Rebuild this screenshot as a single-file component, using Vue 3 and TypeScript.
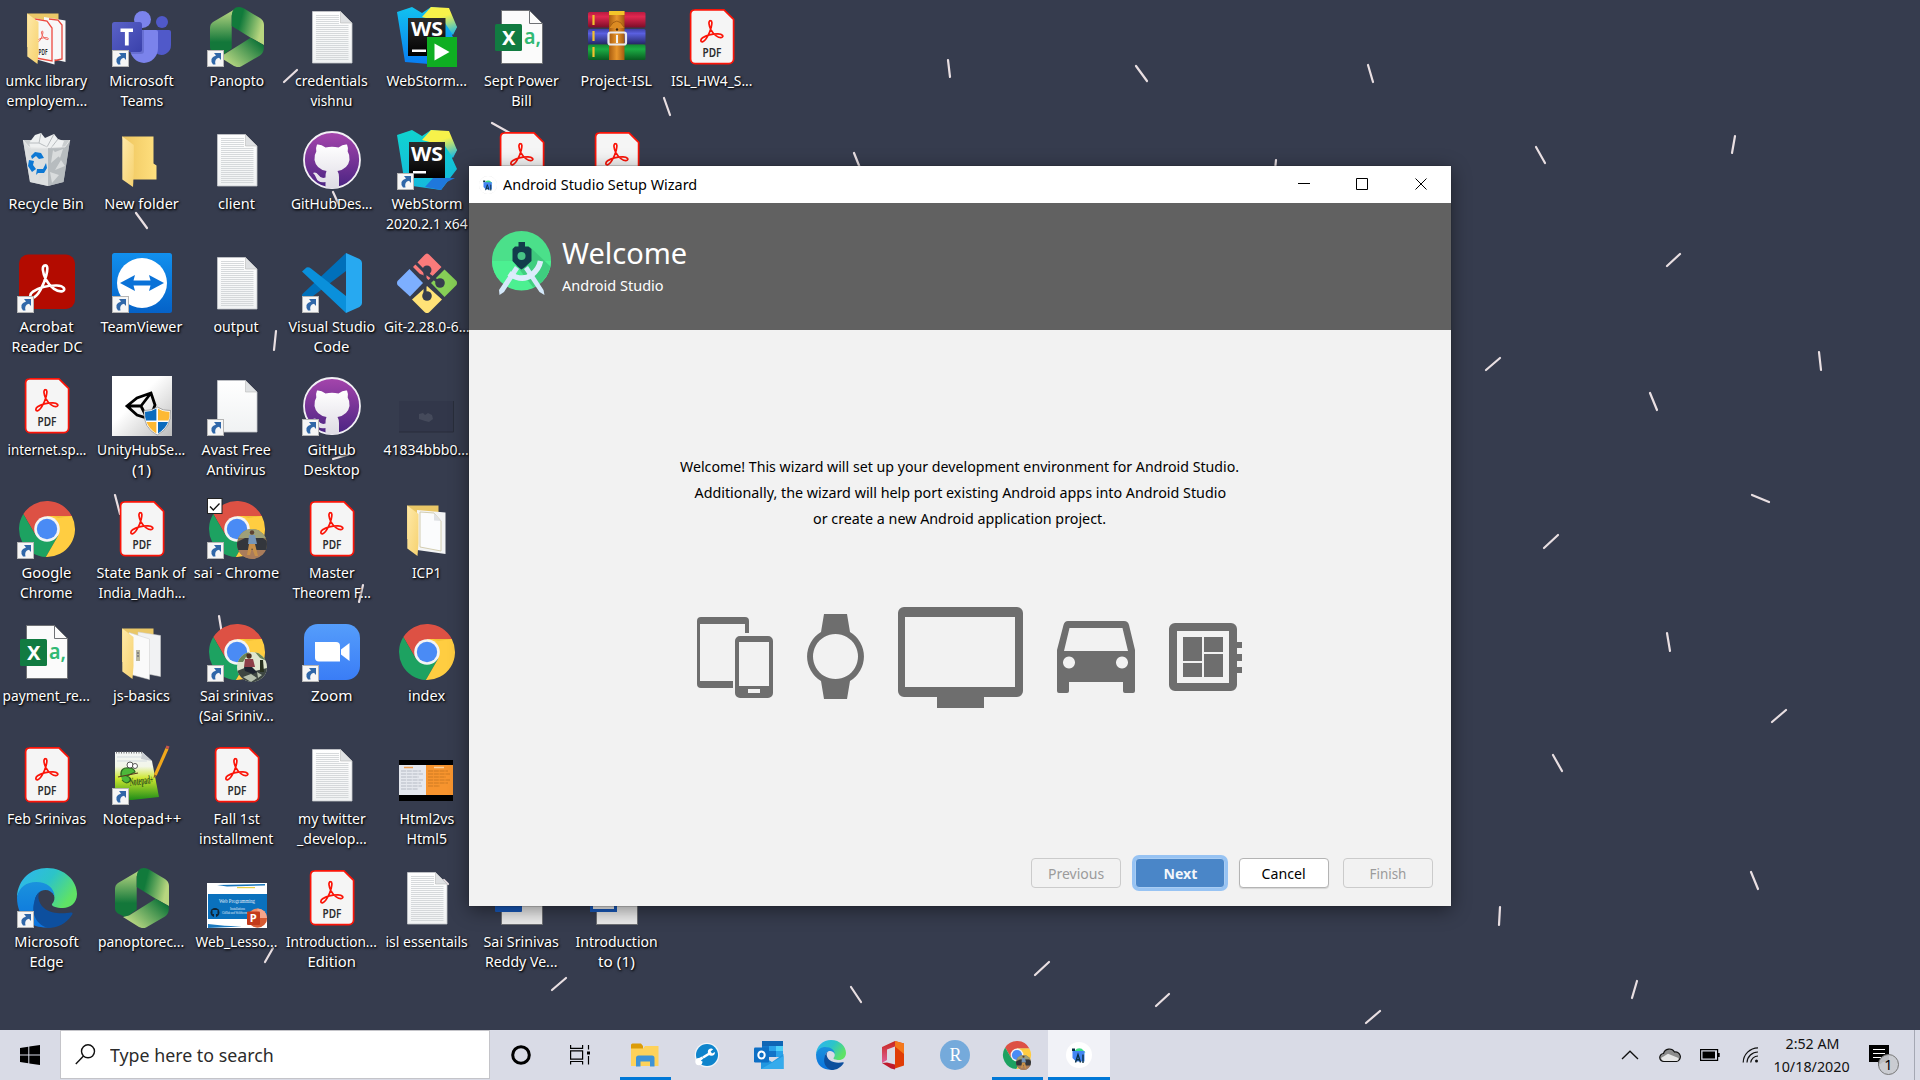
<script setup lang="ts">
import type { Directive } from 'vue'

interface Line { t: string; w: number }
interface Glyph { t: string; x: number; y: number; s: number; w: number; cls: string; r?: number }
interface Item { c: number; r: number; icon: string; lines: Line[]; link?: boolean; check?: boolean; photo?: 1 | 2 }

/* Condenses or widens a run of text to a given pixel width. */
const vFit: Directive<HTMLElement, number> = {
  mounted(el, { value }) {
    const natural = el.offsetWidth
    if (natural > 0) el.style.transform = `scaleX(${(value / natural).toFixed(4)})`
  },
}

const item = (c: number, r: number, icon: string, lines: [string, number][], extra: Partial<Item> = {}): Item =>
  ({ c, r, icon, lines: lines.map(([t, w]) => ({ t, w })), ...extra })

const items: Item[] = [
  item(1, 1, 'folder-pdf', [['umkc library', 82], ['employem...', 81]]),
  item(1, 2, 'bin', [['Recycle Bin', 75]]),
  item(1, 3, 'reader', [['Acrobat', 54], ['Reader DC', 71]], { link: true }),
  item(1, 4, 'pdf', [['internet.sp...', 79]]),
  item(1, 5, 'chrome', [['Google', 50], ['Chrome', 52]], { link: true }),
  item(1, 6, 'excel', [['payment_re...', 87]]),
  item(1, 7, 'pdf', [['Feb Srinivas', 79]]),
  item(1, 8, 'edge', [['Microsoft', 64], ['Edge', 34]], { link: true }),
  item(2, 1, 'teams', [['Microsoft', 64], ['Teams', 43]], { link: true }),
  item(2, 2, 'folder', [['New folder', 75]]),
  item(2, 3, 'teamviewer', [['TeamViewer', 82]], { link: true }),
  item(2, 4, 'unity', [['UnityHubSe...', 88], ['(1)', 19]]),
  item(2, 5, 'pdf', [['State Bank of', 89], ['India_Madh...', 87]]),
  item(2, 6, 'folder-js', [['js-basics', 57]]),
  item(2, 7, 'npp', [['Notepad++', 79]], { link: true }),
  item(2, 8, 'panopto', [['panoptorec...', 86]]),
  item(3, 1, 'panopto', [['Panopto', 55]], { link: true }),
  item(3, 2, 'txt', [['client', 37]]),
  item(3, 3, 'txt', [['output', 45]]),
  item(3, 4, 'blank', [['Avast Free', 69], ['Antivirus', 59]], { link: true }),
  item(3, 5, 'chrome', [['sai - Chrome', 85]], { link: true, check: true, photo: 1 }),
  item(3, 6, 'chrome', [['Sai srinivas', 73], ['(Sai Sriniv...', 75]], { link: true, photo: 2 }),
  item(3, 7, 'pdf', [['Fall 1st', 46], ['installment', 74]]),
  item(3, 8, 'slide', [['Web_Lesso...', 82]]),
  item(4, 1, 'txt', [['credentials', 73], ['vishnu', 42]]),
  item(4, 2, 'github', [['GitHubDes...', 82]]),
  item(4, 3, 'vscode', [['Visual Studio', 87], ['Code', 36]], { link: true }),
  item(4, 4, 'github', [['GitHub', 48], ['Desktop', 56]], { link: true }),
  item(4, 5, 'pdf', [['Master', 46], ['Theorem F...', 79]]),
  item(4, 6, 'zoom', [['Zoom', 41]], { link: true }),
  item(4, 7, 'txt', [['my twitter', 68], ['_develop...', 70]]),
  item(4, 8, 'pdf', [['Introduction...', 91], ['Edition', 48]]),
  item(5, 1, 'webstorm-run', [['WebStorm...', 80]]),
  item(5, 2, 'webstorm', [['WebStorm', 71], ['2020.2.1 x64', 82]], { link: true }),
  item(5, 3, 'git', [['Git-2.28.0-6...', 86]]),
  item(5, 4, 'dark', [['41834bbb0...', 85]]),
  item(5, 5, 'folder-page', [['ICP1', 29]]),
  item(5, 6, 'chrome', [['index', 37]]),
  item(5, 7, 'html5', [['Html2vs', 55], ['Html5', 41]]),
  item(5, 8, 'txt', [['isl essentails', 82]]),
  item(6, 1, 'excel', [['Sept Power', 75], ['Bill', 21]]),
  item(6, 2, 'pdf', []),
  item(6, 8, 'word', [['Sai Srinivas', 75], ['Reddy Ve...', 72]]),
  item(7, 1, 'rar', [['Project-ISL', 72]]),
  item(7, 2, 'pdf', []),
  item(7, 8, 'word2', [['Introduction', 82], ['to (1)', 37]]),
  item(8, 1, 'pdf', [['ISL_HW4_S...', 82]]),
]

/* Lettering that sits on top of an icon's artwork. */
const glyphs: Record<string, Glyph[]> = {
  pdf: [{ t: 'PDF', x: 20.5, y: 50, s: 12.5, w: 19, cls: 'g-dark' }],
  'folder-pdf': [{ t: 'PDF', x: 21.5, y: 48, s: 9, w: 9, cls: 'g-dark' }],
  excel: [
    { t: 'X', x: 10, y: 37.5, s: 20, w: 13.5, cls: 'g-white' },
    { t: 'a,', x: 32, y: 37, s: 21, w: 17, cls: 'g-green' },
  ],
  webstorm: [{ t: 'WS', x: 14, y: 30.5, s: 20, w: 32, cls: 'g-white' }],
  'webstorm-run': [{ t: 'WS', x: 14, y: 29, s: 20, w: 32, cls: 'g-white' }],
  npp: [{ t: 'Notepad+', x: 18, y: 41, s: 12, w: 24, cls: 'g-npp', r: -7 }],
  slide: [
    { t: 'Web Programming', x: 12, y: 35, s: 6.5, w: 36, cls: 'g-slide' },
    { t: 'Installations', x: 23, y: 42.3, s: 3.5, w: 15, cls: 'g-slide' },
    { t: 'GitHub and WebStorm', x: 15, y: 46, s: 3.5, w: 25, cls: 'g-slide' },
    { t: 'P', x: 42.8, y: 54, s: 10.5, w: 7, cls: 'g-white' },
  ],
}

const confetti: [number, number, number, number][] = [
  [948, 60, 950, 77], [1136, 66, 1147, 81], [1368, 65, 1373, 82], [1536, 147, 1545, 163],
  [1735, 136, 1732, 153], [1680, 254, 1667, 266], [1500, 358, 1486, 370], [1650, 393, 1657, 410],
  [1819, 352, 1821, 370], [1752, 495, 1769, 502], [1558, 535, 1544, 548], [1667, 633, 1670, 651],
  [1786, 710, 1772, 722], [1553, 755, 1562, 771], [1751, 872, 1758, 889], [1500, 907, 1499, 925],
  [1637, 981, 1632, 998], [1380, 1011, 1366, 1023], [1169, 994, 1156, 1006], [1049, 962, 1035, 975],
  [851, 987, 861, 1002], [566, 978, 552, 990], [664, 98, 670, 115], [854, 153, 860, 168],
  [492, 123, 510, 133], [1276, 160, 1275, 170], [297, 70, 284, 82], [136, 213, 147, 228],
  [333, 192, 339, 205], [276, 331, 274, 350], [333, 459, 350, 454], [115, 495, 120, 514],
  [363, 585, 359, 602], [219, 616, 222, 634], [273, 948, 265, 962], [444, 880, 448, 884],
]

const textRows = Array.from({ length: 23 }, (_, i) => 8.5 + i * 2)

const apps = [
  { id: 'explorer', state: 'open' }, { id: 'wrench', state: '' }, { id: 'outlook', state: '' },
  { id: 'edge', state: '' }, { id: 'office', state: '' }, { id: 'rstudio', state: '' },
  { id: 'chrome', state: 'open' }, { id: 'studio', state: 'active' },
]
</script>

<template>
  <div class="screen">
    <svg class="defs" width="0" height="0" aria-hidden="true">
      <defs>
        <linearGradient id="gFold" x1="0" y1="0" x2="1" y2="1"><stop offset="0" stop-color="#ffe9a8" /><stop offset="1" stop-color="#f6d270" /></linearGradient>
        <linearGradient id="gFoldB" x1="0" y1="0" x2="1" y2="0"><stop offset="0" stop-color="#eec55e" /><stop offset="1" stop-color="#ffe07f" /></linearGradient>
        <linearGradient id="gPage" x1="0" y1="0" x2="0" y2="1"><stop offset="0" stop-color="#fff" /><stop offset="1" stop-color="#f0f2f3" /></linearGradient>
        <linearGradient id="gPanA" x1="0" y1="0" x2="0" y2="1"><stop offset="0" stop-color="#c0dc86" /><stop offset=".7" stop-color="#13773a" /></linearGradient>
        <linearGradient id="gPanB" x1="0" y1="0" x2="1" y2=".3"><stop offset=".35" stop-color="#117a3b" /><stop offset="1" stop-color="#b8d67f" /></linearGradient>
        <linearGradient id="gPanC" x1="1" y1="0" x2="0" y2=".7"><stop offset=".15" stop-color="#12763a" /><stop offset="1" stop-color="#c3de88" /></linearGradient>
        <linearGradient id="gTeam" x1="0" y1="0" x2="1" y2="1"><stop offset="0" stop-color="#5a62c8" /><stop offset="1" stop-color="#3a41ab" /></linearGradient>
        <linearGradient id="gWs1" x1="0" y1="0" x2="0" y2="1"><stop offset="0" stop-color="#12c2ee" /><stop offset="1" stop-color="#087cf3" /></linearGradient>
        <linearGradient id="gWs2" x1="0" y1="0" x2="0" y2="1"><stop offset="0" stop-color="#10d3cf" /><stop offset="1" stop-color="#15b9dd" /></linearGradient>
        <linearGradient id="gWsY" x1=".4" y1="0" x2=".8" y2="1"><stop offset=".35" stop-color="#f7f24a" /><stop offset="1" stop-color="#20b8e0" /></linearGradient>
        <linearGradient id="gBlk" x1="0" y1="0" x2="0" y2="1"><stop offset="0" stop-color="#2c2c2c" /><stop offset="1" stop-color="#000" /></linearGradient>
        <linearGradient id="gGh" x1="0" y1="0" x2="0" y2="1"><stop offset="0" stop-color="#a545ac" /><stop offset="1" stop-color="#4a2482" /></linearGradient>
        <linearGradient id="gCat" x1="0" y1="0" x2="0" y2="1"><stop offset="0" stop-color="#fff" /><stop offset="1" stop-color="#dedbe4" /></linearGradient>
        <linearGradient id="gTv" x1="0" y1="0" x2="0" y2="1"><stop offset="0" stop-color="#1190ee" /><stop offset="1" stop-color="#0562c8" /></linearGradient>
        <linearGradient id="gUn" x1="0" y1="0" x2="1" y2="1"><stop offset=".4" stop-color="#fff" /><stop offset="1" stop-color="#bcbcbc" /></linearGradient>
        <linearGradient id="gZm" x1="0" y1="0" x2="0" y2="1"><stop offset="0" stop-color="#559dfb" /><stop offset="1" stop-color="#3a7df6" /></linearGradient>
        <linearGradient id="gEd1" x1="0" y1="0" x2="1" y2=".5"><stop offset="0" stop-color="#2fb4f5" /><stop offset=".55" stop-color="#2cc4c8" /><stop offset="1" stop-color="#5fe266" /></linearGradient>
        <linearGradient id="gEd2" x1="0" y1="0" x2="0" y2="1"><stop offset="0" stop-color="#1a92dd" /><stop offset="1" stop-color="#0b72dd" /></linearGradient>
        <linearGradient id="gRed" x1="0" y1="0" x2="0" y2="1"><stop offset="0" stop-color="#b81a40" /><stop offset=".3" stop-color="#e02850" /><stop offset="1" stop-color="#7c0d28" /></linearGradient>
        <linearGradient id="gBlu" x1="0" y1="0" x2="0" y2="1"><stop offset="0" stop-color="#3c40a8" /><stop offset=".3" stop-color="#5a60e0" /><stop offset="1" stop-color="#262968" /></linearGradient>
        <linearGradient id="gGrn" x1="0" y1="0" x2="0" y2="1"><stop offset="0" stop-color="#128a34" /><stop offset=".3" stop-color="#1cad44" /><stop offset="1" stop-color="#085a20" /></linearGradient>
        <linearGradient id="gStrap" x1="0" y1="0" x2="1" y2="0"><stop offset="0" stop-color="#a85c10" /><stop offset=".5" stop-color="#e8962c" /><stop offset="1" stop-color="#a45a10" /></linearGradient>
        <linearGradient id="gNpp" x1="0" y1="0" x2="0" y2="1"><stop offset="0" stop-color="#f3f6f8" /><stop offset=".3" stop-color="#f2f6e8" /><stop offset=".55" stop-color="#cde82e" /><stop offset="1" stop-color="#1f8d18" /></linearGradient>
        <linearGradient id="gOff" x1="0" y1="0" x2="0" y2="1"><stop offset="0" stop-color="#c8251c" /><stop offset="1" stop-color="#e0609a" /></linearGradient>
        <clipPath id="cAv"><circle cx="45" cy="45" r="15" /></clipPath>
        <clipPath id="cSt"><circle cx="29.5" cy="29.5" r="29.5" /></clipPath>
      </defs>

      <symbol id="trefoil" viewBox="0 0 24 24">
        <path d="M10.600 1.200c-2.600 0-1.800 5 .4 9.200 2.800 5.200 7.600 8.300 10.700 7.600 2.400-.9.9-3.600-3.700-3.700-5.600-.1-11.800 1.600-15.400 4-2.600 1.800-2 4.200-.2 4 3.600-.8 7.200-8.600 8.800-14.600 1-4 1-6.500-.6-6.500z" fill="none" stroke="currentColor" stroke-width="1.700" />
      </symbol>
      <symbol id="i-pdf" viewBox="0 0 60 60">
        <path d="M12.500 2.900H42L51.600 12.300V52a4.600 4.600 0 0 1-4.600 4.600H13A4.600 4.600 0 0 1 8.600 52V7a4.200 4.200 0 0 1 4-4.100z" fill="#f5f5f5" stroke="#fb1408" stroke-width="1.700" />
        <svg x="18" y="12.500" width="24" height="24" color="#fb1408"><use href="#trefoil" /></svg>
      </symbol>
      <symbol id="i-blank" viewBox="0 0 60 60">
        <path d="M10.500 4.500H38.500L50 16V56H10.500z" fill="url(#gPage)" stroke="#c5c8cc" stroke-width=".8" />
        <path d="M38.500 4.500V16H50z" fill="#dfe1e3" stroke="#bbb" stroke-width=".6" />
      </symbol>
      <symbol id="i-txt" viewBox="0 0 60 60">
        <use href="#i-blank" />
        <path v-for="y in textRows" :key="y" :d="`M14 ${y}H${y < 18 ? 37 : 46.500}`" stroke="#cdd0d3" stroke-width=".8" />
      </symbol>
      <symbol id="i-folder" viewBox="0 0 60 60">
        <path d="M10 6.500H41.500V33.500L44.500 35.500V49.500H21z" fill="url(#gFoldB)" />
        <path d="M10.300 6.500L21.800 15V43L21 57L10.300 49.500z" fill="url(#gFold)" />
      </symbol>
      <symbol id="i-folder-pdf" viewBox="0 0 60 60">
        <path d="M10 6.500H41.500V40H10z" fill="#eac767" />
        <path d="M27 10L48.500 13.500V55L27 50z" fill="#f8f8f8" /><path d="M32 12L41 13L45 18V52L36 54" fill="none" stroke="#e8483c" stroke-width="1.300" />
        <path d="M18 11L37.500 15.500V57.500L18 52z" fill="#f7f7f7" /><path d="M18 12L30 14L35 21V54L19 51" fill="none" stroke="#ee4a40" stroke-width="1.300" />
        <svg x="20" y="21" width="12" height="17" color="#ee4a40"><use href="#trefoil" /></svg>
        <path d="M10.300 6.500L21.500 15V44L20.500 57L10.300 49.500z" fill="url(#gFold)" />
      </symbol>
      <symbol id="i-folder-js" viewBox="0 0 60 60">
        <path d="M10 6.500H41.500V40H10z" fill="#eac767" />
        <path d="M26 10L48.500 13.500V54.500L26 50z" fill="#f1f2f3" stroke="#cfcfcf" stroke-width=".5" />
        <path d="M17 10.500L37.500 17V57.500L17 52z" fill="#fafafa" stroke="#ccc" stroke-width=".5" />
        <path d="M24 28h4v11h-4z" fill="#b9b7a1" /><path d="M25 31h2M25 34h2" stroke="#556" />
        <path d="M10.300 6.500L21.500 15V44L20.500 57L10.300 49.500z" fill="url(#gFold)" />
      </symbol>
      <symbol id="i-folder-page" viewBox="0 0 60 60">
        <path d="M10 6.500H41.500V40H10z" fill="#eac767" />
        <path d="M20 11L48.500 13.500V55L20 51z" fill="#f3f4f5" />
        <path d="M23 13L37 14L44 22V52L23 48z" fill="#fbfcfd" stroke="#c9c19d" stroke-width=".8" /><path d="M37 14V21.500L44 22z" fill="#e0e2e5" />
        <path d="M10.300 6.500L21.500 15V44L20.500 57L10.300 49.500z" fill="url(#gFold)" />
      </symbol>
      <symbol id="i-bin" viewBox="0 0 60 60">
        <path d="M6 10L53 10L46.500 52L31 56L13 52z" fill="#c9cdcf" />
        <path d="M12 13L18 5L24 3L28 8L37 4L41 9L47 11L44 19H14z" fill="#eff1f2" /><path d="M24 3L22 13L30 17L37 4M12 13L22 13M41 9L34 18" stroke="#b9bdc0" fill="none" />
        <path d="M6 10L12 17L31 18V56L13 52z" fill="#dfe2e3" opacity=".85" /><path d="M31 18L48 17L53 10L46.500 52L31 56z" fill="#b4b9bc" opacity=".85" />
        <path d="M36 20l6 6-8 7zM44 30l4 6-10 4zM33 42l9 3-7 8zM10 18l8 6-5 5zM24 38l5 7-8 6zM38 22l8-3-3 9z" fill="#d9dcdd" />
        <path d="M6 10L12 17H48L53 10" fill="none" stroke="#f0f1f1" stroke-width=".7" />
        <g fill="#0d78d4"><path d="M14 26l4-4 6 1 3 5-5 1-3-3-4 3z" /><path d="M12 30l5 1-1 4 3 4-4 3-4-6z" /><path d="M20 39h6l3-6 1 5-3 5h-6l-2 2z" /></g>
      </symbol>
      <symbol id="i-reader" viewBox="0 0 60 60">
        <rect x="2" y="1.500" width="56" height="54.500" rx="9" fill="#b30b00" />
        <svg x="12" y="10.500" width="37" height="37" color="#fff"><use href="#trefoil" /></svg>
      </symbol>
      <symbol id="i-chrome" viewBox="0 0 60 60">
        <path d="M54.800 17A28 28 0 0 0 6.340 15.020L18.740 36.500L30 30V17z" fill="#dd5144" />
        <path d="M6.340 15.020A28 28 0 0 0 28.860 57.980L41.260 36.500L30 30L18.740 36.500z" fill="#1da261" />
        <path d="M28.860 57.980A28 28 0 0 0 54.800 17H30V30L41.260 36.500z" fill="#ffcd41" />
        <path d="M41 19L54.800 17H36z" fill="#e8b72e" opacity=".6" />
        <circle cx="30" cy="30" r="12.800" fill="#f4f4f4" /><circle cx="30" cy="30" r="10.200" fill="#4a8bf5" />
      </symbol>
      <symbol id="i-photo1" viewBox="0 0 60 60">
        <g clip-path="url(#cAv)"><path d="M30 30h30v30H30z" fill="#8a7654" /><path d="M30 30h30v9H30z" fill="#9da079" /><path d="M30 43l8-4h18l4 3v10H30z" fill="#33363c" /><path d="M30 51h30v9H30z" fill="#a97c5b" /><path d="M42 36h6l2 9h-9z" fill="#7696b8" /><path d="M42 45h6l3 12h-3l-3-8-2 7h-3z" fill="#c8914a" /><circle cx="45" cy="33.500" r="2.200" fill="#5d4333" /></g>
      </symbol>
      <symbol id="i-photo2" viewBox="0 0 60 60">
        <g clip-path="url(#cAv)"><path d="M30 30h30v30H30z" fill="#dfe6cf" /><path d="M30 30h12l-6 10h-6zM48 30h12v9l-7-3z" fill="#6b8557" /><path d="M30 49l10-4 8 4 12-3v14H30z" fill="#3d4642" /><path d="M38 37h8l2 8H37z" fill="#8d3f48" /><circle cx="42" cy="34" r="2.700" fill="#4a3023" /><path d="M37 45l8 0 5 5-4 2-8-3z" fill="#1d2430" /><path d="M53 38h3l1 12h-4z" fill="#28301f" /><path d="M36 55l8-3 6 4-6 4zM50 50l5 3-4 3z" fill="#b5c0ae" /></g>
      </symbol>
      <symbol id="i-excel" viewBox="0 0 60 60">
        <path d="M9.500 3.500H37.500L50.500 16.500V56.500H9.500z" fill="#fbfbfb" stroke="#6f7175" /><path d="M37.500 3.500V16.500H50.500" fill="none" stroke="#6f7175" />
        <rect x="3" y="17" width="27" height="27" rx="1.500" fill="#117b41" />
      </symbol>
      <symbol id="i-word" viewBox="0 0 60 60"><path d="M9.500 3.500H50.500V56.500H9.500z" fill="#ececec" stroke="#6f7175" /><rect x="3" y="17" width="27" height="27" rx="1" fill="#185abd" /></symbol>
      <symbol id="i-word2" viewBox="0 0 60 60"><path d="M9.500 3.500H50.500V56.500H9.500z" fill="#ececec" stroke="#6f7175" /><rect x="3" y="17" width="27" height="27" fill="#185abd" /><rect x="6" y="20" width="21" height="21" fill="#f3f3f3" /></symbol>
      <symbol id="i-edge" viewBox="0 0 60 60">
        <path d="M0 29C1 11 14 0 30 0C48 0 60 13 60 26C60 35 53 40 46 40C39 40 34 38 35 36C40 31 37 23 30 19C20 12 6 15 0 29z" fill="url(#gEd1)" />
        <path d="M0 29C2 19 10 14 19 14C30 14 37 20 37.500 28C34 22 29 21 24 23C17 27 16 36 21 44C27 53 38 57 44 56C32 63 0 62 0 29z" fill="url(#gEd2)" />
        <path d="M25 22.500C19 25 21 35 27 40C34 46 46 46 54 44.500C56 44 56 46 54.500 47.500C49 56 40 60 31 60C20 57 14 46 17 35C18 29 21 24 25 22.500z" fill="#0d4f9e" />
      </symbol>
      <symbol id="i-teams" viewBox="0 0 60 60">
        <circle cx="50" cy="15" r="6" fill="#5059c9" /><path d="M44 23H57a2 2 0 0 1 2 2V38a9.500 9.500 0 0 1-15 8z" fill="#5059c9" />
        <circle cx="30.500" cy="12.500" r="8.500" fill="#7b83eb" /><path d="M18 23H44a2 2 0 0 1 2 2V41a14 15 0 0 1-28 0z" fill="#7b83eb" />
        <path d="M18 23H32V44a3 3 0 0 1-3 3H19z" fill="#5f66c8" opacity=".7" />
        <rect y="15" width="30" height="30" rx="2.500" fill="url(#gTeam)" /><path d="M8.500 21.500H21V25H16.700V38.500H12.900V25H8.500z" fill="#fff" />
      </symbol>
      <symbol id="i-teamviewer" viewBox="0 0 60 60">
        <rect width="60" height="60" rx="2.500" fill="url(#gTv)" /><circle cx="30" cy="30" r="25" fill="#fff" />
        <path d="M8 30L23 22L21.500 27.500H38.500L37 22L52 30L37 38L38.500 32.500H21.500L23 38z" fill="#0a72d8" />
      </symbol>
      <symbol id="i-unity" viewBox="0 0 60 60">
        <rect width="60" height="60" fill="url(#gUn)" />
        <path d="M15 30L25 22L39 17L43 29L38 43L25 39zM15 30H29M29 30L39 17M29 30L35 42" fill="none" stroke="#000" stroke-width="2.800" />
        <path d="M45.200 31Q39 35 32 34.500Q31 52 45.200 59Q59.500 52 58.500 34.500Q51 35 45.200 31z" fill="#fff" stroke="#777" stroke-width=".6" />
        <path d="M44.400 32.500Q39 36 33 35.800Q32.800 41 34 44.600H44.400z" fill="#0b6bbd" /><path d="M46 32.500Q51 36 57.500 35.800Q57.700 41 56.500 44.600H46z" fill="#fdb933" /><path d="M34.500 46H44.400V57.500Q37 53 34.500 46z" fill="#fdb933" /><path d="M56 46H46V57.500Q53.500 53 56 46z" fill="#0b6bbd" />
      </symbol>
      <symbol id="i-npp" viewBox="0 0 60 60">
        <path d="M3 7L30 7L40 16L47 52L20 55L3 55z" fill="url(#gNpp)" /><path d="M30 7L29 14L40 16z" fill="#c9ced2" />
        <path d="M4 7.500H30" stroke="#777" stroke-width="2" stroke-dasharray="1 1.500" /><path d="M5 12h24M5 16h30" stroke="#c7d0d8" stroke-width=".7" />
        <path d="M9 31Q8 22 17 23Q22 23 23 27L15 31Q20 33 18 36Q14 40 10 35" fill="#4db83a" stroke="#2d6a22" stroke-width="1.200" /><circle cx="18" cy="20" r="3" fill="#fff" stroke="#333" stroke-width=".8" /><circle cx="23" cy="21" r="2.500" fill="#fff" stroke="#333" stroke-width=".8" />
        <path d="M6 32L26 28" stroke="#5b3a1c" stroke-width="1.200" />
        <path d="M41.500 33.500L42.300 28.500L53.500 3L56.500 4.300L45 30z" fill="#f0a81c" /><path d="M53.500 3L54.500 .5L57.500 1.500L56.500 4.300z" fill="#c8554a" /><path d="M41.500 33.500L42.300 29.500l2 1z" fill="#7b5a2c" />
      </symbol>
      <symbol id="i-panopto" viewBox="0 0 60 60">
        <path d="M3 21Q3 17 6 15L29 1.500Q24.700 5 24.700 10V41.500L14 49.500L7 46Q3 44 3 40z" fill="url(#gPanA)" />
        <path d="M24.700 19V9Q25 0 32 0Q35 0 37 1.500L53 11Q57 13.500 57 18V38L43.700 30.700z" fill="url(#gPanB)" />
        <path d="M43.700 30.700L56.500 38Q58 45 53 48.500L34 59.500Q31 61 27 59L11 49L17 47.500z" fill="url(#gPanC)" />
      </symbol>
      <symbol id="i-slide" viewBox="0 0 60 60">
        <path d="M0 15H60V60H0z" fill="#fff" /><path d="M10 17L58 16V17.500L20 18.500z" fill="#1673b9" /><path d="M30 19h18v1.200H30z" fill="#e7cf43" /><path d="M1 26H60V51H1z" fill="#0a71bd" />
        <path d="M1 57L35 58.500L1 60zM1 56L20 58L1 57z" fill="#1a79bf" />
        <circle cx="8" cy="44.500" r="4.500" fill="#0f2435" /><path d="M5.500 42h5v4h-1.500v3h-2v-3h-1.500z" fill="#0a71bd" />
        <circle cx="50.500" cy="50" r="9.500" fill="#f08a64" /><path d="M50.500 50V40.500A9.500 9.500 0 0 1 60 50z" fill="#f5a58a" /><path d="M41 50a9.500 9.500 0 0 0 19 0z" fill="#d65a32" />
        <rect x="40" y="43.500" width="13" height="13.500" rx="1" fill="#c33a1a" />
      </symbol>
      <symbol id="i-github" viewBox="0 0 60 60">
        <circle cx="30" cy="30" r="28" fill="url(#gGh)" stroke="#f2f0f5" stroke-width="1.800" />
        <path d="M15 14.500Q19 14 23.500 17.500Q30 16 36.500 17.500Q41 14 45 14.500Q46.500 18 45.700 21.500Q48 25 47.500 30Q46 39 35.500 41Q37 43.500 37 47V57.500Q30 59 23.500 57.500V52Q16 53.500 14 47.500Q13 44.500 11 43Q13.500 41.500 16.500 45Q19 49 23.500 47.500Q23.500 43 24.500 41Q14 39 12.500 30Q12 25 14.300 21.500Q13.500 18 15 14.500z" fill="url(#gCat)" />
      </symbol>
      <symbol id="i-vscode" viewBox="0 0 60 60">
        <path d="M44 0V18L6.500 46.500Q4 48 0 43.500Q-.5 42 1 40.500z" fill="#0070ba" /><path d="M0 18.500L4.500 14.500Q6.500 13.500 9 15.500L44 43V60z" fill="#0a90db" />
        <path d="M44 0L57.500 6Q60 7.500 60 10V50Q60 52.500 57.500 54L44 60z" fill="#27a9f1" />
      </symbol>
      <symbol id="i-zoom" viewBox="0 0 60 60">
        <rect x="2" y="2" width="56" height="56" rx="14" fill="url(#gZm)" /><path d="M13 20H34a4 4 0 0 1 4 4V39.500H17a4 4 0 0 1-4-4z" fill="#fff" /><path d="M39 27.500L47.500 21V39L39 32.500z" fill="#fff" />
      </symbol>
      <symbol id="i-webstorm" viewBox="0 0 60 60">
        <path d="M0 5L15 0L25 6L34 0L52 2L50 10L60 20L55 28L60 39L44 60L8 55z" fill="url(#gWs2)" /><path d="M44 60L28 57L36 48H58L50 52z" fill="#1f78dc" /><path d="M34 0L52 1L60 20L56 28L48 16L25 10z" fill="url(#gWsY)" />
        <rect x="12" y="12" width="36" height="36" fill="url(#gBlk)" /><path d="M16 41h13v2.500H16z" fill="#fff" />
      </symbol>
      <symbol id="i-webstorm-run" viewBox="0 0 60 60">
        <path d="M0 5L15 0L25 6L34 0L52 2L50 10L60 20L55 28L60 39L44 58L8 55z" fill="url(#gWs1)" /><path d="M34 0L52 1L60 20L56 28L48 16L25 10z" fill="url(#gWsY)" />
        <rect x="11" y="11" width="37.500" height="38" fill="url(#gBlk)" /><path d="M15 42.500h14v2.500H15z" fill="#fff" />
        <path d="M30 30H60V60H30z" fill="#0fae22" /><path d="M37.500 36.500V53.500L52.500 45z" fill="#fff" />
      </symbol>
      <symbol id="i-git" viewBox="0 0 60 60">
        <path d="M16 14L27.500 2Q30 -1 32.500 2L44.500 14L31.500 27L26 22L23 21z" fill="#fb7b7b" />
        <path d="M0.500 28L12.500 16L26 30L13 43.500L.5 32Q-.5 30 .5 28z" fill="#7dafff" />
        <path d="M47.500 16.500L59.500 28Q60.500 30 59.500 32L47.500 44L34 30z" fill="#86cf56" />
        <path d="M15 46.500L30 33L45 46.500L32.500 59Q30 61.500 27.500 59z" fill="#ffe277" />
        <path d="M18 9L28 19V42M29 20L43 30" stroke="#363c4e" stroke-width="3" fill="none" /><circle cx="30" cy="17" r="4.500" fill="#363c4e" /><circle cx="43" cy="30" r="4.800" fill="#363c4e" /><circle cx="30" cy="43" r="4.800" fill="#363c4e" />
      </symbol>
      <symbol id="i-dark" viewBox="0 0 60 60">
        <path d="M2 25H56V56H2z" fill="#32374a" /><path d="M2 56H56.500V25" fill="none" stroke="#282d3b" /><path d="M22 38l4-1 2 2 3-2 4 2 1 4-4 3-4-1-6-2z" fill="#454a5b" />
      </symbol>
      <symbol id="i-html5" viewBox="0 0 60 60">
        <path d="M2 15H56V56H2z" fill="#000" /><path d="M2 20H29V50H2z" fill="#e5e8ee" /><path d="M29 20H56V50H29z" fill="#f7942e" /><path d="M7 22.500h9" stroke="#f0a050" stroke-width="1.500" /><path d="M37 22.500h10" stroke="#fbd3a0" stroke-width="1.500" />
        <path d="M4 26h20M4 29h22M4 32h18M4 35h22M4 38h20M4 41h21M4 44h17" stroke="#b5bac4" stroke-width="1.100" stroke-dasharray="5 .8" /><path d="M31 26h20M31 29h22M31 32h18M31 35h22M31 38h20M31 41h12" stroke="#cd7b22" stroke-width="1.100" stroke-dasharray="5 .8" />
      </symbol>
      <symbol id="i-rar" viewBox="0 0 60 60">
        <rect x="1" y="5" width="57.500" height="15.500" rx="1.500" fill="url(#gRed)" /><rect x="1" y="22" width="57.500" height="15" rx="1.500" fill="url(#gBlu)" /><rect x="1" y="37.500" width="57.500" height="15.500" rx="1.500" fill="url(#gGrn)" />
        <path d="M6.500 8v10M6.500 24v10M6.500 40v10" stroke="#f2c12e" stroke-width="2.200" />
        <path d="M22 4H37.500V53H22z" fill="url(#gStrap)" /><path d="M22 4H37.500V8H22z" fill="#f3c52a" /><path d="M22 21q8-14 15.500 0" fill="#dc8b22" stroke="#8f4f0e" stroke-width=".7" />
        <rect x="21.500" y="25.500" width="17.500" height="12" rx="2" fill="none" stroke="#e8e8ec" stroke-width="2.200" /><path d="M30 28v8" stroke="#f3f3f3" stroke-width="2" /><circle cx="30" cy="22.500" r="1.200" fill="#3c2208" />
      </symbol>

      <symbol id="t-explorer" viewBox="0 0 30 30"><path d="M1 5q0-1.500 1.500-1.500H11l2 2.500V9H1z" fill="#dc9c08" /><path d="M1 8.500H13l2-2.500H28.500V26H1z" fill="#fed25a" /><path d="M6 26.500V18a2.500 2.500 0 0 1 2.500-2.500H22a2.500 2.500 0 0 1 2.500 2.500v8.500H20V21.500H10.500V26.500z" fill="#3f93d6" /></symbol>
      <symbol id="t-wrench" viewBox="0 0 30 30"><circle cx="15" cy="15" r="12.300" fill="#f2f5f9" /><circle cx="15" cy="15" r="11" fill="#0e84cc" /><path d="M11 17.500L19 12.500" stroke="#fff" stroke-width="2.600" /><path d="M21.200 9.300L18.600 11.500L20 13.500L23 12A3.600 3.600 0 1 1 19.500 8.500zM8.800 20.700L11.400 18.500L10 16.500L7 18A3.600 3.600 0 1 0 10.500 21.500z" fill="#fff" /></symbol>
      <symbol id="t-outlook" viewBox="0 0 30 30"><path d="M8 1H29V16H8z" fill="#0f66b5" /><path d="M8 6h7v5H8z" fill="#1177cb" /><path d="M15 6h7v5h-7z" fill="#2aa3ea" /><path d="M22 6h7v5h-7z" fill="#4fd0f7" /><path d="M8 11h7v6H8z" fill="#0c5399" /><path d="M15 11h7v6h-7z" fill="#1274c8" /><path d="M22 11h7v6h-7z" fill="#2aa3ea" /><path d="M7 15L18 22L29.500 14V29H7z" fill="#2297e0" /><path d="M7 29L29.500 16V29z" fill="#36abec" /><rect y="7.500" width="15" height="15" rx="1.200" fill="#0d6fc5" /><ellipse cx="7.500" cy="15" rx="3.200" ry="3.500" fill="none" stroke="#fff" stroke-width="2" /></symbol>
      <symbol id="t-edge" viewBox="0 0 60 60"><use href="#i-edge" /></symbol>
      <symbol id="t-office" viewBox="0 0 30 30"><path d="M4 7L17 1V6.500L9 9.500V20L4 23z" fill="url(#gOff)" /><path d="M17 1L26 3.500V25.500L17 28.500V6.500z" fill="#e03c06" /><path d="M17 1L26 3.500V14L17 6.500z" fill="#f4781c" /><path d="M4 23L9 22.500L17 24.500V29.500L13 28.500z" fill="#bf1a2c" /></symbol>
      <symbol id="t-rstudio" viewBox="0 0 30 30"><circle cx="15" cy="15" r="15" fill="#75aadb" /></symbol>
      <symbol id="t-chrome" viewBox="0 0 60 60"><use href="#i-chrome" /><svg x="0" y="2" width="60" height="60" viewBox="4 2 56 60"><use href="#i-photo1" width="60" height="60" /></svg></symbol>
      <symbol id="t-studio" viewBox="0 0 30 30"><circle cx="15" cy="15" r="13" fill="#fff" /><path d="M11 10.500a5 4.500 0 0 1 8.500 0l2 2h-11z" fill="#3ddc84" /><path d="M8 8.500h3v2.500H8z" fill="#073042" /><path d="M8.500 11H20.500V21.500H12L8.500 18z" fill="#4285f4" /><path d="M11.500 22.500L14 14.500L16.500 22.500M12.300 19.800h3.800M19 14.500v8.500" stroke="#0b3144" stroke-width="1.400" fill="none" /></symbol>
    </svg>

    <div class="desktop">
      <svg class="paper" width="1920" height="1030">
        <path v-for="(l, i) in confetti" :key="i" :d="`M${l[0]} ${l[1]}L${l[2]} ${l[3]}`" />
      </svg>
      <div class="icons">
        <div v-for="(it, i) in items" :key="i" class="icon" :style="{ gridColumn: it.c, gridRow: it.r }">
          <svg class="pic" width="60" height="60">
            <use :href="`#i-${it.icon}`" width="60" height="60" />
            <text
              v-for="g in glyphs[it.icon] ?? []" :key="g.t" :x="g.x" :y="g.y" :class="g.cls" :font-size="g.s"
              :textLength="g.w" lengthAdjust="spacingAndGlyphs" :transform="g.r ? `rotate(${g.r} ${g.x} ${g.y})` : undefined"
            >{{ g.t }}</text>
            <use v-if="it.photo" :href="`#i-photo${it.photo}`" width="60" height="60" />
            <g v-if="it.link">
              <rect x=".5" y="43.500" width="16" height="16" fill="#f6f6f6" stroke="#b5b5b5" />
              <path d="M6 57.500Q1.500 51 9 48.500L7 46H14V53L12 50.800Q7 52 8.500 57.500z" fill="#3067a8" />
            </g>
            <g v-if="it.check">
              <rect x=".5" y="-.5" width="14.500" height="15" fill="#fff" stroke="#222" />
              <path d="M3 7.500L6.300 11L12.500 4.500" fill="none" stroke="#111" stroke-width="1.300" />
            </g>
          </svg>
          <div v-for="(l, k) in it.lines" :key="k" class="label"><span v-fit="l.w">{{ l.t }}</span></div>
        </div>
      </div>

      <div class="window">
        <div class="titlebar">
          <svg class="app-icon" width="18" height="18" viewBox="2 2 26 26"><circle cx="15" cy="15" r="12.700" fill="#fff" stroke="#ddd" stroke-width=".7" /><use href="#t-studio" width="30" height="30" /></svg>
          <span class="title" v-fit="194">Android Studio Setup Wizard</span>
          <svg class="controls" width="174" height="37">
            <path d="M27 17.500h12" /><path d="M85.500 12.500h11v11h-11z" /><path d="M144.500 12.500l11 11m0-11l-11 11" />
          </svg>
        </div>
        <div class="banner">
          <svg width="60" height="65" viewBox="0 0 60 65">
            <circle cx="29.500" cy="29.500" r="29.500" fill="#4be08a" />
            <path d="M0 30H59A29.500 29.500 0 0 1 0 30z" fill="#4cf091" />
            <path clip-path="url(#cSt)" d="M38 16L60 37V60H44L27 38z" fill="#3bbf78" opacity=".7" />
            <path d="M23 35L7 59L7.500 64L12 61L27 38zM36 35L51.500 59L52.500 64L47.500 61L32 38z" fill="#d5e9fa" />
            <path d="M17 42.500Q30 51 39.500 44Q47 38 48.500 30" fill="none" stroke="#dcecfb" stroke-width="5.500" />
            <path d="M26.500 11H33V15.500H36.500L39.500 18V30L33 36L29.500 38.500L26 36L20.500 30V18L23 15.500H26.500z" fill="#123c4b" />
            <circle cx="29.500" cy="25" r="4" fill="#47c486" />
          </svg>
          <div class="banner-text">
            <div class="h1"><span v-fit="125">Welcome</span></div>
            <div class="h2"><span v-fit="102">Android Studio</span></div>
          </div>
        </div>
        <div class="body">
          <p><span v-fit="559">Welcome! This wizard will set up your development environment for Android Studio.</span></p>
          <p><span v-fit="532">Additionally, the wizard will help port existing Android apps into Android Studio</span></p>
          <p><span v-fit="293">or create a new Android application project.</span></p>
          <svg class="devices" width="546" height="102" viewBox="697 607 546 102">
            <path fill-rule="evenodd" d="M701 617H745a4 4 0 0 1 4 4V633H745V624H700V681H733V688H701a4 4 0 0 1-4-4V621a4 4 0 0 1 4-4z" />
            <path fill-rule="evenodd" d="M740 636H768a5 5 0 0 1 5 5V693a5 5 0 0 1-5 5H740a5 5 0 0 1-5-5V641a5 5 0 0 1 5-5zM739 642V686H769V642zM748 689V693H760V689z" />
            <path fill-rule="evenodd" d="M824 614H847L850 632A28.500 28.500 0 0 1 850 681L847 699H824L821 681A28.500 28.500 0 0 1 821 632zM835.500 634a22.500 22.500 0 1 0 .01 0z" />
            <path fill-rule="evenodd" d="M904 607H1017a6 6 0 0 1 6 6V691a6 6 0 0 1-6 6H984V708H937V697H904a6 6 0 0 1-6-6V613a6 6 0 0 1 6-6zM905 617V687H1015V617z" />
            <path fill-rule="evenodd" d="M1068 621H1124Q1128 621 1129 625L1135 650V691a2 2 0 0 1-2 2H1125a2 2 0 0 1-2-2V682H1069V691a2 2 0 0 1-2 2H1059a2 2 0 0 1-2-2V650L1063.500 625Q1064.500 621 1068 621zM1069.500 628L1064 651H1128L1122.500 628zM1069 656.500a6 6 0 1 0 .01 0zM1122 656.500a6 6 0 1 0 .01 0z" />
            <path fill-rule="evenodd" d="M1175 623H1231a6 6 0 0 1 6 6V642H1242V648H1237V654H1242V661H1237V667H1242V673H1237V685a6 6 0 0 1-6 6H1175a6 6 0 0 1-6-6V629a6 6 0 0 1 6-6zM1177 631V683H1229V631z" />
            <path d="M1183 637H1202V661H1183zM1204 637H1223V652H1204zM1183 663H1202V677H1183zM1204 654H1223V677H1204z" />
          </svg>
        </div>
        <div class="footer">
          <button class="btn off"><span v-fit="56">Previous</span></button>
          <button class="btn primary"><span v-fit="34">Next</span></button>
          <button class="btn"><span v-fit="44">Cancel</span></button>
          <button class="btn off"><span v-fit="37">Finish</span></button>
        </div>
      </div>
    </div>

    <div class="taskbar">
      <div class="start"><svg width="20" height="20"><path d="M0 3L8.300 1.800V9.500H0zM9.300 1.600L20 0V9.500H9.300zM0 10.500H8.300V18.300L0 17zM9.300 10.500H20V20L9.300 18.500z" /></svg></div>
      <div class="search">
        <svg width="21" height="21" viewBox="0 0 21 21"><circle cx="13" cy="7.300" r="6.500" /><path d="M8.500 12L.8 20" /></svg>
        <span v-fit="164">Type here to search</span>
      </div>
      <div class="cell"><svg width="20" height="20"><circle cx="10" cy="10" r="8.300" fill="none" stroke="#000" stroke-width="3" /></svg></div>
      <div class="cell view"><svg width="21" height="20" fill="none" stroke="#000" stroke-width="1.200"><path d="M.6 0V3.400H12.600V0M.6 5.800h12v8.300h-12zM.6 19.500V16.500H12.600V19.500M18.500 0V4.500M18.500 11V19.500" /><path d="M17 6.500h3v3h-3z" fill="#000" stroke="none" /></svg></div>
      <div v-for="a in apps" :key="a.id" class="cell" :class="a.state">
        <svg width="30" height="30">
          <use :href="`#t-${a.id}`" width="30" height="30" />
          <text v-if="a.id === 'rstudio'" class="r-letter" x="15.500" y="21" text-anchor="middle">R</text>
        </svg>
      </div>
      <div class="tray">
        <div class="t40"><svg width="18" height="10"><path d="M1 9L9 1.200L17 9" fill="none" stroke="#111" stroke-width="1.300" /></svg></div>
        <div class="t40"><svg width="22" height="16" viewBox="0 0 22 16"><path d="M5 14.500a4 4 0 0 1-.5-8 6 6 0 0 1 11-1.500 4.500 4.500 0 0 1 2 9.500z" fill="#8d8d8d" stroke="#111" stroke-width="1.200" /><path d="M2 11L9 6.800L19.500 11Q20 14 17 14H5Q3 14 2 11z" fill="#e6e6e6" /></svg></div>
        <div class="t40"><svg width="20" height="12"><path d="M.6 .6h17v10.800h-17z" fill="none" stroke="#000" stroke-width="1.200" /><path d="M2.500 2.500h12.500v7H2.500zM18 4h1.700v4H18z" /></svg></div>
        <div class="t40"><svg width="17" height="16" viewBox="0 0 17 16" fill="none" stroke="#111" stroke-width="1.200"><path d="M1.200 15.500A15 15 0 0 1 16 .8M5 15.500A11 11 0 0 1 16 5M8.700 15.500A7.500 7.500 0 0 1 16 9" /><circle cx="14.500" cy="14" r="1.500" fill="#111" stroke="none" /></svg></div>
        <div class="clock"><div><span v-fit="54">2:52 AM</span></div><div><span v-fit="76">10/18/2020</span></div></div>
        <div class="action">
          <svg width="31" height="31"><path d="M0 0H20V17H14L9 21V17H0z" /><path d="M4 4.500h12M4 8.500h12M4 12.500h8" stroke="#fff" stroke-width="1.200" /><circle cx="19.500" cy="19.500" r="10" fill="#c9cbd0" fill-opacity=".92" stroke="#777" /><text x="19.500" y="24.500" text-anchor="middle" font-size="14.500">1</text></svg>
        </div>
        <div class="peek"></div>
      </div>
    </div>
  </div>
</template>

<style>
body { margin: 0; overflow: hidden; background: #363c4e; }
</style>

<style scoped>
.screen { width: 1920px; height: 1080px; display: flex; flex-direction: column; position: relative; overflow: hidden; font-family: "Noto Sans", "Open Sans", sans-serif; font-size: 14.5px; color: #111; }
.defs { position: absolute; }
.g-dark { font-weight: 600; fill: #2d2d2d; }
.g-white { font-weight: 700; fill: #fff; }
.g-green { font-weight: 600; fill: #31b974; }
.g-npp { font-family: "Liberation Serif", serif; font-weight: 700; fill: #33531b; }
.g-slide { font-family: "Liberation Serif", serif; fill: #e0edf8; }
.r-letter { font-family: "Liberation Serif", serif; font-size: 18px; fill: #fff; }
.desktop { position: relative; height: 1030px; background: #363c4e; }
.paper { position: absolute; left: 0; top: 0; }
.paper path { stroke: #e9dfe2; stroke-width: 2.2; stroke-linecap: round; fill: none; }
.icons { position: relative; display: grid; grid-template-columns: repeat(8, 95px); grid-template-rows: repeat(8, 123px); padding-top: 7px; margin-left: -0.5px; }
.icon { display: flex; flex-direction: column; align-items: center; }
.pic { display: block; overflow: visible; margin-bottom: 3px; flex: none; }
.label { height: 20px; line-height: 20px; color: #fff; white-space: nowrap; text-shadow: 1px 1px 2px #000, 0 1px 3px rgba(0, 0, 0, .7); margin-left: -1px; }
span { display: inline-block; white-space: nowrap; }
.window { position: absolute; left: 469px; top: 166px; width: 982px; height: 740px; display: flex; flex-direction: column; background: #f2f2f2; box-shadow: 0 0 1px #222, 0 4px 18px rgba(0, 0, 0, .45); }
.titlebar { height: 37px; background: #fff; display: flex; align-items: center; color: #000; }
.app-icon { margin: 0 6px 0 10px; flex: none; }
.title { transform-origin: left; line-height: 20px; padding-bottom: 2px; }
.controls { margin-left: auto; margin-right: 6px; fill: none; stroke: #000; stroke-width: 1; }
.banner { height: 127px; box-sizing: border-box; background: #616161; color: #fff; display: flex; padding: 28px 0 0 23px; }
.banner-text { margin-left: 10px; }
.banner-text span { transform-origin: left; }
.h1 { font-size: 29px; line-height: 40px; padding-top: 2px; }
.h2 { line-height: 20px; margin-top: 2px; }
.body { flex: 1; display: flex; flex-direction: column; align-items: center; padding-top: 123px; color: #000; }
.body p { margin: 0; height: 26px; line-height: 26px; }
.devices { margin-top: 76px; margin-left: 19px; fill: #6e6e6e; flex: none; }
.footer { display: flex; justify-content: flex-end; gap: 14px; padding: 0 18px 18px 0; }
.btn { width: 90px; height: 30px; box-sizing: border-box; padding: 0; border: 1px solid #b4b4b4; border-radius: 4px; background: #fff; color: #000; font: inherit; line-height: 28px; box-shadow: 0 1px 1px rgba(0, 0, 0, .12); }
.btn.off { background: #f2f2f2; border-color: #cbcbcb; color: #9b9b9b; box-shadow: none; }
.btn.primary { background: #4a86c8; border: 1px solid #a9cdf3; color: #f3f6fa; font-weight: 700; box-shadow: 0 0 0 3px #97c3f3; }
.taskbar { height: 50px; background: #d9dbe6; display: flex; align-items: stretch; }
.start { width: 60px; display: flex; align-items: center; justify-content: center; }
.search { width: 430px; box-sizing: border-box; height: 49px; background: #fff; border: 1px solid #c4c4c9; display: flex; align-items: center; color: #2b2b2b; font-size: 18px; padding-left: 14px; gap: 14px; }
.search svg { fill: none; stroke: #111; stroke-width: 1.4; flex: none; }
.search span { transform-origin: left; line-height: 26px; }
.cell { width: 62px; display: flex; align-items: center; justify-content: center; box-sizing: border-box; }
.cell.view { padding-right: 5px; }
.cell.open { background: linear-gradient(#0078d7, #0078d7) center bottom / 51px 3px no-repeat; }
.cell.active { background: linear-gradient(#0078d7, #0078d7) center bottom / 100% 3px no-repeat, #f1f2f7; }
.tray { margin-left: auto; display: flex; align-items: stretch; }
.t40 { width: 40px; display: flex; align-items: center; justify-content: center; }
.clock { width: 84px; text-align: center; line-height: 23px; padding-top: 2px; box-sizing: border-box; }
.action { width: 60px; display: flex; justify-content: flex-start; padding: 15px 0 0 15px; box-sizing: border-box; }
.peek { width: 6px; box-sizing: border-box; border-left: 1px solid #a5a8b3; }
</style>
